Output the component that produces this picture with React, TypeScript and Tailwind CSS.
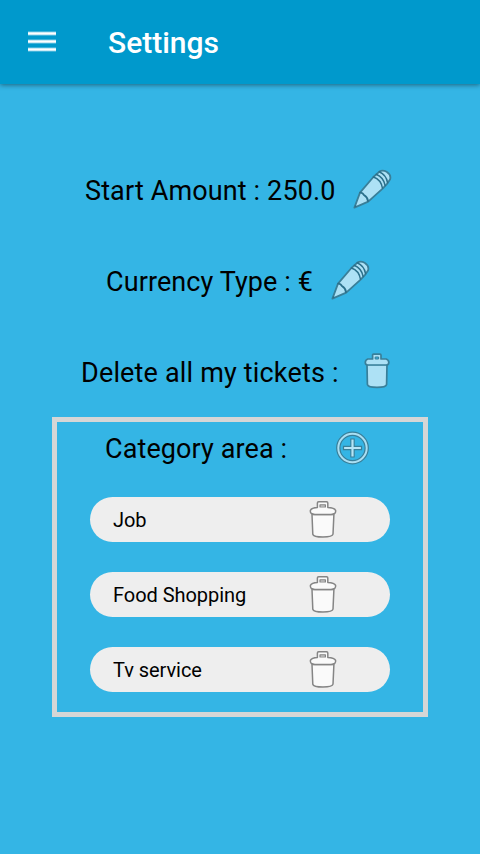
import React from "react";

function Pencil() {
  return (
    <svg width="40" height="41" viewBox="0 0 40 41" fill="none" className="shrink-0" strokeLinecap="round" strokeLinejoin="round">
      <path d="M2.4 38.6 L8 23.6 L21.4 8 L27.4 2.6 Q30.6 0.6 34.6 2.8 Q39.6 6 38 10.6 L34.6 15.4 L30.6 19.6 L16.2 32.6 Z" fill="#ade1f5" stroke="#397f99" strokeWidth="1.8" />
      <path d="M8.2 23.6 Q10.6 23.4 12 26 Q15.4 28 16 32" stroke="#2a6f8a" strokeWidth="1.9" />
      <path d="M21.4 8 Q29 10.6 30.4 19 M24.2 5.2 Q31.6 8.2 33.2 16.6 M27.2 2.8 Q34.2 5.8 35.6 13.8" stroke="#2a6f8a" strokeWidth="1.5" />
      <path d="M2.4 38.6 L3.3 36 L4.8 37.4 Z" fill="#2a6f8a" />
    </svg>
  );
}

function BlueTrash() {
  return (
    <svg width="26" height="38" viewBox="0 0 26 38" className="shrink-0" fill="#ade1f5" stroke="#397f99" strokeWidth="1.7" strokeLinejoin="round">
      <path d="M3 12.5 L3.4 32.5 Q4 35.4 13 35.4 Q22 35.4 22.6 32.5 L23 12.5 Z" />
      <path d="M8.6 7 V3.2 Q8.6 2.2 9.6 2.2 H16 Q17 2.2 17 3.2 V7 H22.2 Q24.8 8 24.8 10.4 Q24.8 13 22.2 13 H3.8 Q1.3 13 1.3 10.4 Q1.3 8 3.8 7 Z" />
      <path d="M11.2 5 H14.6 V7 H11.2 Z" fill="#34b5e5" strokeWidth="1" />
    </svg>
  );
}

function GrayTrash() {
  return (
    <svg width="28" height="40" viewBox="0 0 28 40" className="shrink-0" fill="#fafafa" stroke="#858585" strokeWidth="1.5" strokeLinejoin="round">
      <path d="M3 14.5 L3.8 34.2 Q4.5 37 14 37 Q23.4 37 24 34.2 L24.9 14.5 Z" />
      <path d="M8.4 7.6 V3 Q8.4 1.8 9.6 1.8 H17.6 Q18.8 1.8 18.8 3 V7.6 Q25.4 7.8 26.6 10.4 Q27.2 14.4 22 14.4 H6 Q0.8 14.4 1.4 10.4 Q2.6 7.8 8.4 7.6 Z" />
      <path d="M11 4.8 H16.4 V7 H11 Z" fill="#dedede" strokeWidth="1.2" />
    </svg>
  );
}

function AddIcon() {
  return (
    <svg width="35" height="34" viewBox="0 0 35 34" fill="none" className="shrink-0">
      <circle cx="17.5" cy="17" r="14.2" stroke="#397f99" strokeWidth="4.4" />
      <circle cx="17.5" cy="17" r="14.2" stroke="#a9dff3" strokeWidth="2" />
      <path d="M17.5 7.4 V26.6 M7.9 17 H27.1" stroke="#397f99" strokeWidth="4.4" />
      <path d="M17.5 8.6 V25.4 M9.1 17 H25.9" stroke="#b5e4f6" strokeWidth="2.2" />
    </svg>
  );
}

function MenuBar() {
  return <span className="h-[5px] border-y border-[#40b2d9] bg-linear-to-b from-[#b3e0f0] via-white to-[#b3e0f0] bg-origin-content" />;
}

function Category({ name }: { name: string }) {
  return (
    <li className="flex h-[45px] w-[300px] items-center justify-between rounded-full bg-[#eeeeee] pl-[23px] pr-[53px] text-[20px]">
      <span className="tracking-[-0.05px]">{name}</span>
      <GrayTrash />
    </li>
  );
}

export default function App() {
  return (
    <div className="flex h-[854px] w-[480px] flex-col overflow-hidden bg-[#34b5e5] font-[Roboto,sans-serif] text-black">
      <header className="flex h-[84px] shrink-0 items-center bg-[#0099cc] pl-7 shadow-[0_1px_5px_rgba(0,0,0,0.45)]">
        <button aria-label="Menu" className="mb-px flex w-7 flex-col gap-[3px]">
          <MenuBar />
          <MenuBar />
          <MenuBar />
        </button>
        <h1 className="ml-[52px] pt-0.5 text-[30px] font-medium leading-[36px] text-white">Settings</h1>
      </header>
      <main className="flex flex-col text-[27px] leading-[32px]">
        <div className="mt-[84px] flex h-[42px] items-center pl-[85px]">
          <span className="w-[267px] whitespace-nowrap pt-1 tracking-[0.13px]">Start Amount : 250.0</span>
          <Pencil />
        </div>
        <div className="mt-[49px] flex h-[42px] items-center pl-[106px]">
          <span className="w-[224px] whitespace-nowrap pt-1 tracking-[0.1px]">Currency Type : €</span>
          <Pencil />
        </div>
        <div className="mt-[49px] flex h-[42px] items-center pl-[81px]">
          <span className="w-[283px] whitespace-nowrap pt-1 tracking-[0.17px]">Delete all my tickets :</span>
          <BlueTrash />
        </div>
        <section className="mx-[52px] mt-[25px] h-[300px] border-[5px] border-[#d6d6d6]">
          <div className="mt-[5px] flex h-[42px] items-center pl-12">
            <span className="w-[230px] whitespace-nowrap pt-0.5 tracking-[0.1px]">Category area :</span>
            <AddIcon />
          </div>
          <ul className="mt-7 flex flex-col gap-[30px] pl-[33px]">
            <Category name="Job" />
            <Category name="Food Shopping" />
            <Category name="Tv service" />
          </ul>
        </section>
      </main>
    </div>
  );
}
